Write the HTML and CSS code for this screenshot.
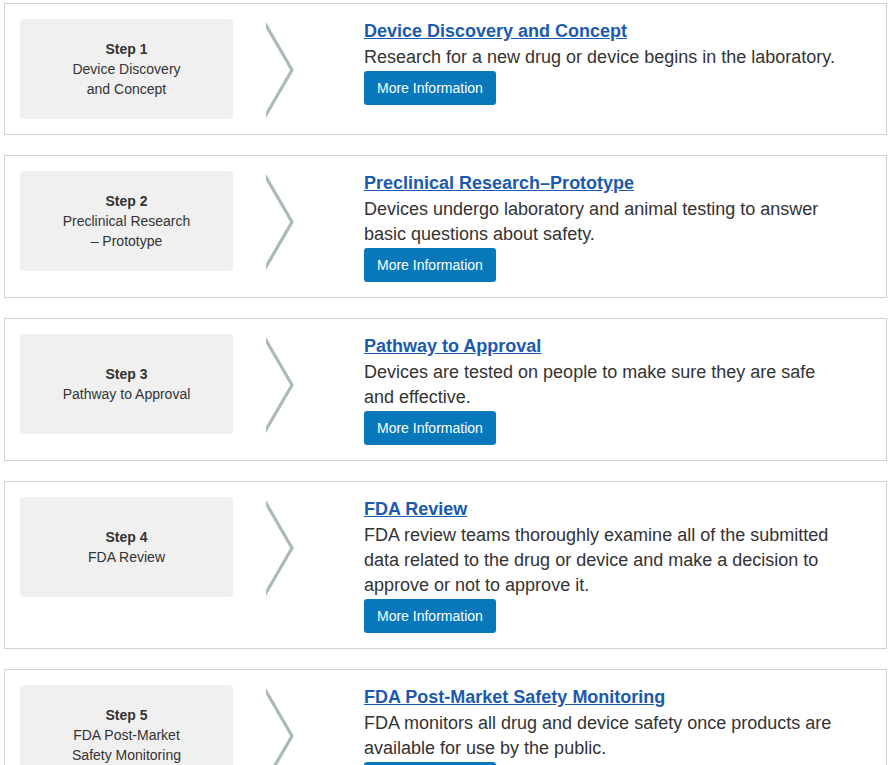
FILE: index.html
```html
<!DOCTYPE html>
<html lang="en">
<head>
    <meta charset="UTF-8">
    <meta name="viewport" content="width=device-width, initial-scale=1.0">
    <title>The Device Development Process</title>
    <link rel="stylesheet" href="styles.css">
</head>
<body>
<div class="steps">
    <div class="step-card">
        <div class="step-box">
            <div><strong>Step 1</strong><br>Device Discovery<br>and Concept</div>
        </div>
        <div class="step-arrow">
            <svg width="30" height="96" viewBox="0 0 30 96"><polyline points="-3,-3 26,47 -3,97" /></svg>
        </div>
        <div class="step-info">
            <a href="#" class="step-title">Device Discovery and Concept</a>
            <p>Research for a new drug or device begins in the laboratory.</p>
            <a href="#" class="more-btn">More Information</a>
        </div>
    </div>

    <div class="step-card">
        <div class="step-box">
            <div><strong>Step 2</strong><br>Preclinical Research<br>– Prototype</div>
        </div>
        <div class="step-arrow">
            <svg width="30" height="96" viewBox="0 0 30 96"><polyline points="-3,-3 26,47 -3,97" /></svg>
        </div>
        <div class="step-info">
            <a href="#" class="step-title">Preclinical Research–Prototype</a>
            <p>Devices undergo laboratory and animal testing to answer basic questions about safety.</p>
            <a href="#" class="more-btn">More Information</a>
        </div>
    </div>

    <div class="step-card">
        <div class="step-box">
            <div><strong>Step 3</strong><br>Pathway to Approval</div>
        </div>
        <div class="step-arrow">
            <svg width="30" height="96" viewBox="0 0 30 96"><polyline points="-3,-3 26,47 -3,97" /></svg>
        </div>
        <div class="step-info">
            <a href="#" class="step-title">Pathway to Approval</a>
            <p>Devices are tested on people to make sure they are safe and effective.</p>
            <a href="#" class="more-btn">More Information</a>
        </div>
    </div>

    <div class="step-card">
        <div class="step-box">
            <div><strong>Step 4</strong><br>FDA Review</div>
        </div>
        <div class="step-arrow">
            <svg width="30" height="96" viewBox="0 0 30 96"><polyline points="-3,-3 26,47 -3,97" /></svg>
        </div>
        <div class="step-info">
            <a href="#" class="step-title">FDA Review</a>
            <p>FDA review teams thoroughly examine all of the submitted data related to the drug or device and make a decision to approve or not to approve it.</p>
            <a href="#" class="more-btn">More Information</a>
        </div>
    </div>

    <div class="step-card">
        <div class="step-box">
            <div><strong>Step 5</strong><br>FDA Post-Market<br>Safety Monitoring</div>
        </div>
        <div class="step-arrow">
            <svg width="30" height="96" viewBox="0 0 30 96"><polyline points="-3,-3 26,47 -3,97" /></svg>
        </div>
        <div class="step-info">
            <a href="#" class="step-title">FDA Post-Market Safety Monitoring</a>
            <p>FDA monitors all drug and device safety once products are available for use by the public.</p>
            <a href="#" class="more-btn">More Information</a>
        </div>
    </div>
</div>
</body>
</html>
```

FILE: styles.css
```css
body {
    margin: 0;
    font-family: "Liberation Sans", Arial, sans-serif;
    color: #333;
    background-color: #fff;
}

.steps {
    padding: 3px 1px 0 4px;
}

.step-card {
    display: grid;
    grid-template-columns: 213px 131px 1fr;
    align-items: start;
    padding: 15px;
    border: 1px solid #c9d6d3;
    margin-bottom: 20px;
}

.step-box {
    height: 100px;
    display: flex;
    align-items: center;
    justify-content: center;
    text-align: center;
    background-color: #f0f0f0;
    border-radius: 4px;
    font-size: 14px;
    line-height: 20px;
}

.step-arrow {
    padding: 4px 0 0 33px;
}

.step-arrow svg {
    display: block;
    overflow: hidden;
}

.step-arrow polyline {
    fill: none;
    stroke: #abbab7;
    stroke-width: 3.2;
}

.step-info {
    padding-right: 26px;
}

.step-title {
    display: block;
    font-size: 18px;
    line-height: 24px;
    font-weight: bold;
    color: #1b5aae;
    margin-bottom: 2px;
}

.step-info p {
    margin: 0;
    font-size: 18px;
    line-height: 25px;
}

.more-btn {
    display: inline-block;
    margin-top: 1px;
    height: 34px;
    line-height: 34px;
    padding: 0 13px;
    background-color: #0779bb;
    color: #fff;
    font-size: 14px;
    text-decoration: none;
    border-radius: 3px;
}
```
